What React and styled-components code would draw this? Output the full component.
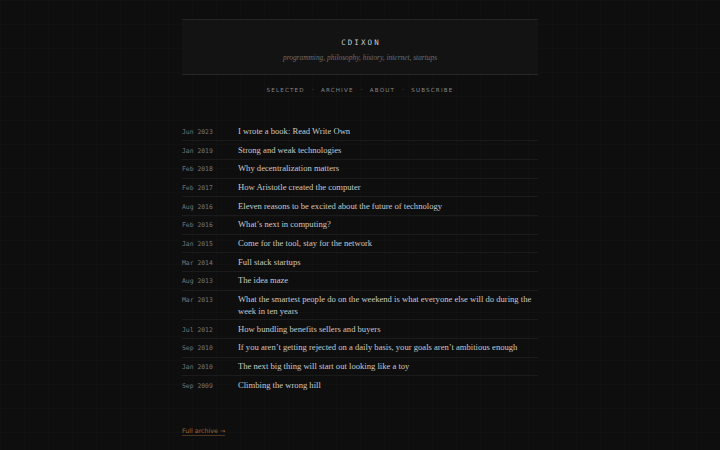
import React from "react";
import styled, { createGlobalStyle } from "styled-components";

const GlobalStyle = createGlobalStyle`
  html, body {
    margin: 0;
    padding: 0;
    background-color: #0e0e0e;
    background-image:
      linear-gradient(rgba(255,255,255,0.012) 1px, transparent 1px),
      linear-gradient(90deg, rgba(255,255,255,0.012) 1px, transparent 1px);
    background-size: 24px 24px;
    min-height: 100%;
  }
  body {
    -webkit-font-smoothing: antialiased;
  }
`;

const Page = styled.div`
  width: 356px;
  margin: 0 auto;
  padding-top: 19px;
  padding-bottom: 8px;
`;

const Masthead = styled.header`
  background: #131313;
  border-top: 1px solid #242424;
  border-bottom: 1px solid #262626;
  height: 56px;
  display: flex;
  flex-direction: column;
  align-items: center;
  justify-content: center;
  gap: 6px;
  padding-top: 5px;
  box-sizing: border-box;
`;

const SiteName = styled.h1`
  margin: 0;
  font-family: "DejaVu Sans Mono", "Liberation Mono", monospace;
  font-weight: normal;
  font-size: 7.5px;
  letter-spacing: 2.1px;
  color: #c9c9c9;
  line-height: 9px;
  padding-left: 2px;
`;

const Tagline = styled.p`
  margin: 0;
  font-family: "Liberation Serif", serif;
  font-style: italic;
  font-size: 7.4px;
  color: #6d6d6d;
  line-height: 9px;
`;

const Nav = styled.nav`
  display: flex;
  justify-content: center;
  align-items: center;
  gap: 7px;
  margin-top: 10px;
  height: 10px;
`;

const NavLink = styled.a`
  font-family: "DejaVu Sans", "Liberation Sans", sans-serif;
  font-size: 5.6px;
  letter-spacing: 1.15px;
  color: #858585;
  text-decoration: none;
  text-transform: uppercase;
`;

const NavDot = styled.span`
  font-family: "DejaVu Sans", sans-serif;
  font-size: 7px;
  color: #4c4c4c;
`;

const PostList = styled.ul`
  list-style: none;
  margin: 27.5px 0 0;
  padding: 0;
`;

const PostRow = styled.li`
  display: grid;
  grid-template-columns: 56px 1fr;
  align-items: start;
  padding: 2.35px 0;
  border-bottom: 1px solid ${p => (p.$last ? "transparent" : "#1b1b1b")};
`;

const PostDate = styled.span`
  display: block;
  font-family: "DejaVu Sans Mono", "Liberation Mono", monospace;
  font-size: 6.4px;
  color: #767676;
  line-height: 12px;
  height: 12px;
  padding-top: 1px;
`;

const PostTitle = styled.a`
  display: block;
  font-family: "Liberation Serif", serif;
  font-size: 8.6px;
  line-height: 12px;
  color: #c8c8c8;
  text-decoration: none;
`;

const Footer = styled.div`
  margin-top: 27.5px;
  line-height: 10px;
`;

const ArchiveLink = styled.a`
  font-family: "DejaVu Sans", "Liberation Sans", sans-serif;
  font-size: 6.3px;
  color: #9a6a3c;
  text-decoration: none;
  border-bottom: 1px solid #4a3520;
  padding-bottom: 1px;
`;

const posts = [
  ["Jun 2023", "I wrote a book: Read Write Own"],
  ["Jan 2019", "Strong and weak technologies"],
  ["Feb 2018", "Why decentralization matters"],
  ["Feb 2017", "How Aristotle created the computer"],
  ["Aug 2016", "Eleven reasons to be excited about the future of technology"],
  ["Feb 2016", "What’s next in computing?"],
  ["Jan 2015", "Come for the tool, stay for the network"],
  ["Mar 2014", "Full stack startups"],
  ["Aug 2013", "The idea maze"],
  ["Mar 2013", "What the smartest people do on the weekend is what everyone else will do during the week in ten years"],
  ["Jul 2012", "How bundling benefits sellers and buyers"],
  ["Sep 2010", "If you aren’t getting rejected on a daily basis, your goals aren’t ambitious enough"],
  ["Jan 2010", "The next big thing will start out looking like a toy"],
  ["Sep 2009", "Climbing the wrong hill"],
];

const navItems = ["Selected", "Archive", "About", "Subscribe"];

export default function App() {
  return (
    <>
      <GlobalStyle />
      <Page>
        <Masthead>
          <SiteName>CDIXON</SiteName>
          <Tagline>programming, philosophy, history, internet, startups</Tagline>
        </Masthead>
        <Nav>
          {navItems.map((item, i) => (
            <React.Fragment key={item}>
              {i > 0 && <NavDot>·</NavDot>}
              <NavLink href="#">{item}</NavLink>
            </React.Fragment>
          ))}
        </Nav>
        <PostList>
          {posts.map(([date, title], i) => (
            <PostRow key={title} $last={i === posts.length - 1}>
              <PostDate>{date}</PostDate>
              <PostTitle href="#">{title}</PostTitle>
            </PostRow>
          ))}
        </PostList>
        <Footer>
          <ArchiveLink href="#">Full archive →</ArchiveLink>
        </Footer>
      </Page>
    </>
  );
}
